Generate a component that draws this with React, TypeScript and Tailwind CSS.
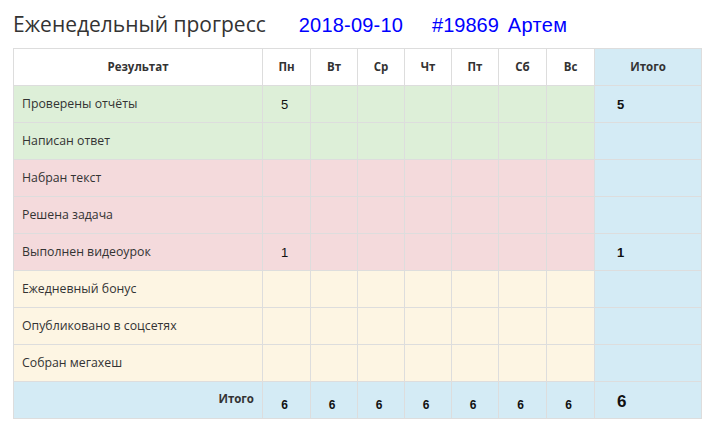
import React from 'react';

const days = ['Пн', 'Вт', 'Ср', 'Чт', 'Пт', 'Сб', 'Вс'];

const rows = [
  { label: 'Проверены отчёты', bg: 'bg-[#ddefd8]', mon: '5', total: '5' },
  { label: 'Написан ответ', bg: 'bg-[#ddefd8]' },
  { label: 'Набран текст', bg: 'bg-[#f4dadc]' },
  { label: 'Решена задача', bg: 'bg-[#f4dadc]' },
  { label: 'Выполнен видеоурок', bg: 'bg-[#f4dadc]', mon: '1', total: '1' },
  { label: 'Ежедневный бонус', bg: 'bg-[#fdf5e3]' },
  { label: 'Опубликовано в соцсетях', bg: 'bg-[#fdf5e3]' },
  { label: 'Собран мегахеш', bg: 'bg-[#fdf5e3]' },
];

const colW = ['w-[249px]', 'w-[48px]', 'w-[47px]', 'w-[47px]', 'w-[47px]', 'w-[47px]', 'w-[48px]', 'w-[48px]', 'w-[107px]'];

export default function App() {
  return (
    <div className="w-[722px] h-[429px] bg-white px-[13px] pt-[9px] font-['Open_Sans',sans-serif] text-[#333]">
      <div className="flex items-baseline h-[39px] font-['Liberation_Sans',Arial,sans-serif] text-[20px] text-[#0000ff]">
        <h1 className="font-['Open_Sans',sans-serif] text-[21px] leading-[30px] text-[#333]">Еженедельный прогресс</h1>
        <span className="ml-[33px] tracking-[0.2px]">2018-09-10</span>
        <span className="ml-[29px]">#19869</span>
        <span className="ml-[9px] tracking-[0.3px]">Артем</span>
      </div>
      <table className="w-[688px] border-collapse table-fixed text-[12.3px]">
        <colgroup>
          {colW.map((w, i) => (
            <col key={i} className={w} />
          ))}
        </colgroup>
        <thead>
          <tr className="h-[37px]">
            <th className="border border-[#ddd] text-[11.5px] font-bold text-center">Результат</th>
            {days.map((d) => (
              <th key={d} className="border border-[#ddd] text-[11.5px] font-bold text-center">{d}</th>
            ))}
            <th className="border border-[#ddd] bg-[#d4ebf5] text-[11.5px] font-bold text-center">Итого</th>
          </tr>
        </thead>
        <tbody>
          {rows.map((r) => (
            <tr key={r.label} className={`h-[37px] ${r.bg}`}>
              <td className="border border-[#ddd] px-[8px]">{r.label}</td>
              {days.map((d, i) => (
                <td key={d} className="border border-[#ddd] align-top pt-[9px] text-center font-['Liberation_Sans',Arial,sans-serif] text-[13px] text-[#111]">
                  {i === 0 && r.mon ? <span className="pr-[4px]">{r.mon}</span> : null}
                </td>
              ))}
              <td className="border border-[#ddd] bg-[#d4ebf5] align-top pt-[9px] pl-[22px] font-['Liberation_Sans',Arial,sans-serif] text-[13px] font-bold text-[#111]">
                {r.total}
              </td>
            </tr>
          ))}
          <tr className="h-[37px] bg-[#d4ebf5]">
            <td className="border border-[#ddd] pr-[8px] pb-[2px] text-right text-[11.5px] font-bold">Итого</td>
            {days.map((d) => (
              <td key={d} className="border border-[#ddd] pt-[10px] text-center font-['Liberation_Sans',Arial,sans-serif] text-[12px] font-bold text-[#111]">
                <span className="pr-[4px]">6</span>
              </td>
            ))}
            <td className="border border-[#ddd] pl-[22px] pt-[4px] font-['Liberation_Sans',Arial,sans-serif] text-[17px] font-bold text-[#111]">6</td>
          </tr>
        </tbody>
      </table>
    </div>
  );
}
